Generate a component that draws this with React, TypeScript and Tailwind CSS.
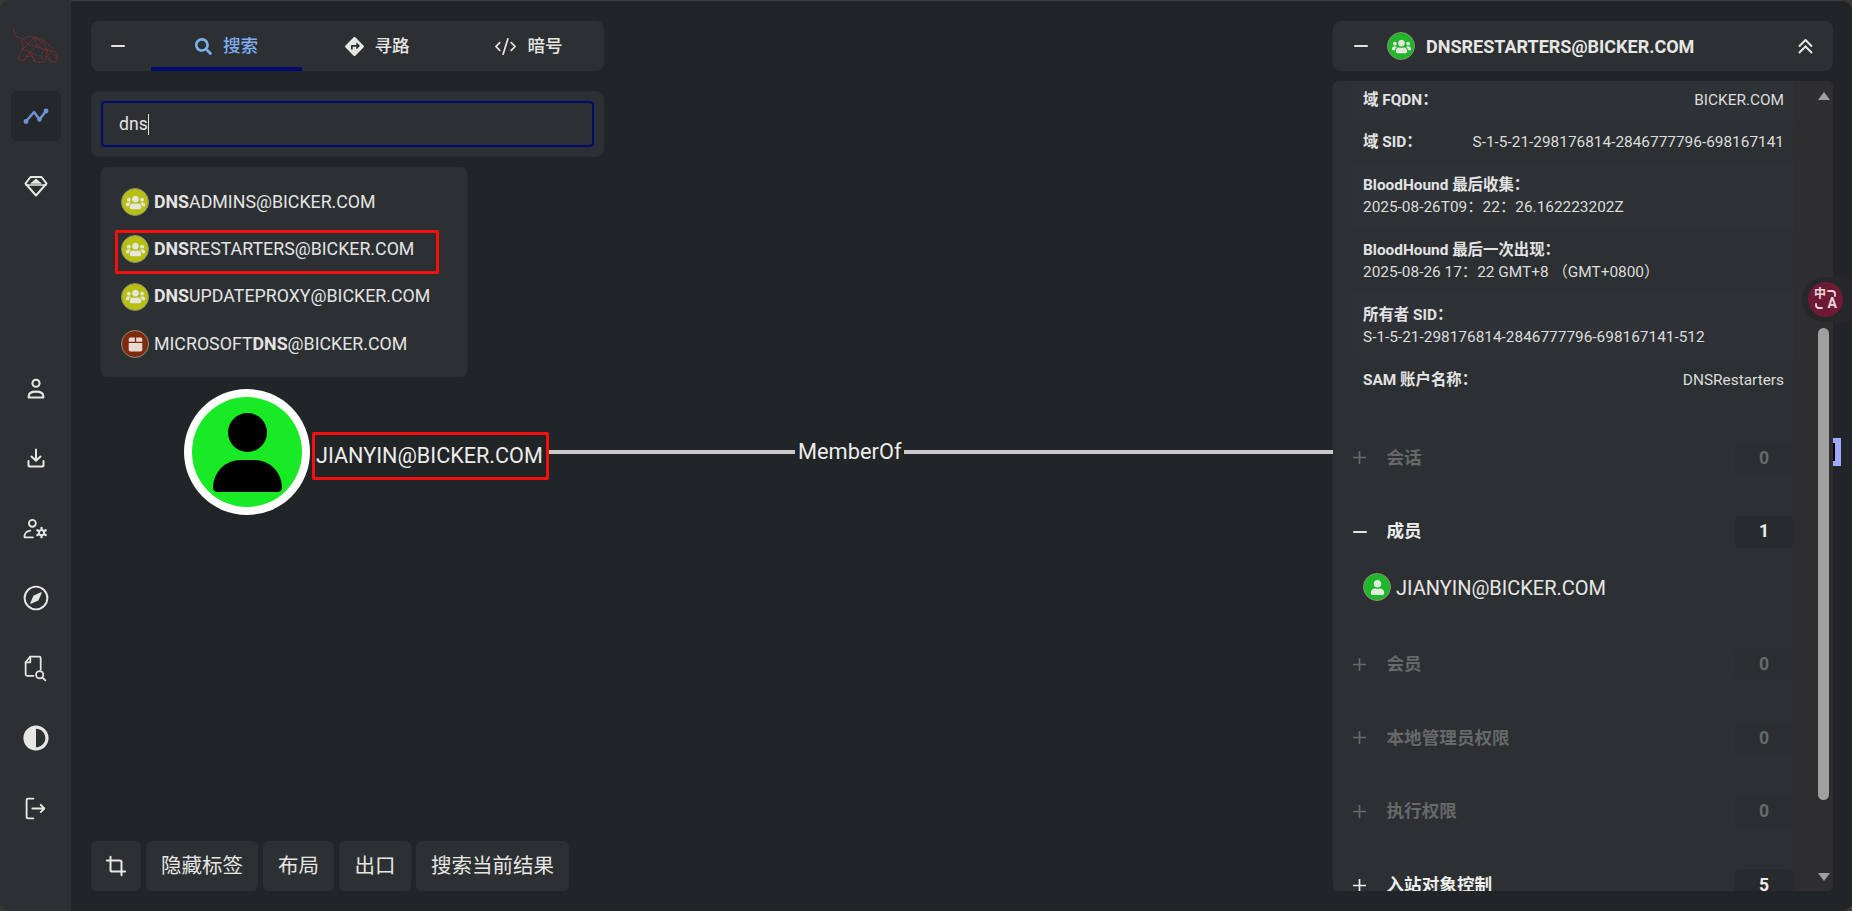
import React from "react";
import { FaSearch, FaDirections, FaUsers, FaUser, FaAdjust } from "react-icons/fa";
import { Crop, CodeXml } from "lucide-react";

const FONT = "font-['Roboto','Noto_Sans_CJK_SC',sans-serif]";

function Minus() {
  return <div className="h-[2px] w-[14px] rounded-sm bg-[#e3e3e3]" />;
}

function NodeIcon({ color, kind }: { color: string; kind: "users" | "user" | "box" }) {
  return (
    <span
      className="flex h-[28px] w-[28px] shrink-0 items-center justify-center rounded-full border border-[#8d8d7a]"
      style={{ backgroundColor: color }}
    >
      {kind === "users" && <FaUsers className="h-[19px] w-[19px] text-[#e6e6e0]" />}
      {kind === "user" && <FaUser className="h-[15px] w-[15px] text-[#dff0df]" />}
      {kind === "box" && (
        <svg viewBox="0 0 16 16" className="h-[17px] w-[17px]">
          <path d="M3 1.500h4.400v4H1.600V3a1.500 1.500 0 0 1 1.400-1.500zM8.600 1.500H13A1.500 1.500 0 0 1 14.400 3v2.500H8.600zM1.600 6.700h12.800V13a1.600 1.600 0 0 1-1.600 1.600H3.200A1.600 1.600 0 0 1 1.600 13z" fill="#e6d9d4" />
        </svg>
      )}
    </span>
  );
}

function Logo() {
  return (
    <svg viewBox="0 0 225 180" className="mt-[15px] h-[60px] w-[75px] shrink-0" fill="none" stroke="#a02a38" strokeWidth="2.200" strokeDasharray="4 1.500">
      <path d="M42 42c0 12 2 20 10 24 8 4 14 7 20 5 7-3 14-7 20-6 12 1 24 3 34 9 12 7 24 17 32 28 7 9 12 17 14 25 1 6 0 11-2 13-5 1-13 1-16-1-4-6-8-13-12-16-3 4-3 12-8 17-8 2-22 2-30 0-3-5-4-12-6-16-6-1-14 0-20 1-1 4-3 9-6 11-6 1-12 0-15-2-1-5 0-10 3-15 4-7 9-16 9-24 0-6-3-12-4-18" />
      <path d="M70 72l14 16-16 14 22 8-12 16M84 88l18-20 10 26-22 16 16 30M102 68l26 12-16 14 22 10-14 18 14 18M128 80l14 26-8-2 20 2 16 22M142 106l-4 22 16 12M84 88l28 6M112 94l22 10M90 110l22 12M154 108l-16 20" />
    </svg>
  );
}

function SideIcon({ children }: { children: React.ReactNode }) {
  return <div className="flex h-[70px] w-full items-center justify-center text-[#e6e6e3]">{children}</div>;
}

function Sidebar() {
  const sw = { fill: "none", stroke: "currentColor", strokeWidth: 2, strokeLinecap: "round" as const, strokeLinejoin: "round" as const };
  return (
    <aside className="z-10 flex h-full w-[71px] shrink-0 flex-col bg-[#2c3033]">
      <Logo />
      <div className="ml-[11px] mt-[16px] flex h-[50px] w-[50px] items-center justify-center rounded-md bg-[#24282a]">
        <svg viewBox="0 0 26 16" className="h-[16px] w-[28px]" fill="none">
          <path d="M3 13.500L11 4l5.500 7.500L23 3" stroke="#6f93d8" strokeWidth="2.400" strokeLinecap="round" strokeLinejoin="round" />
          <circle cx="3" cy="13.500" r="2.400" fill="#6f93d8" />
          <circle cx="16.500" cy="11.500" r="2.200" fill="#6f93d8" />
          <circle cx="23" cy="3" r="2.400" fill="#6f93d8" />
        </svg>
      </div>
      <div className="mt-[23px] flex h-[44px] items-center justify-center text-[#e6e6e3]">
        <svg viewBox="0 0 24 22" className="h-[22px] w-[26px]" {...sw}>
          <path d="M6.500 2h11L22.500 8.500 12 20.500 1.500 8.500z" />
          <path d="M6 8.700h12L12 3.500z" fill="currentColor" stroke="none" />
          <path d="M2 10h20" strokeWidth="1.600" />
        </svg>
      </div>
      <div className="mt-[145px] flex flex-col">
        <SideIcon>
          <svg viewBox="0 0 18 20" className="h-[21px] w-[20px]" {...sw}>
            <circle cx="9" cy="5" r="3.400" />
            <path d="M2 18.500v-1c0-3 3-4.500 7-4.500s7 1.500 7 4.500v1z" />
          </svg>
        </SideIcon>
        <SideIcon>
          <svg viewBox="0 0 18 20" className="h-[20px] w-[20px]" {...sw}>
            <path d="M9 1.500v11M4.500 8.500L9 12.800l4.500-4.300M1.500 13v4.500a1 1 0 0 0 1 1h13a1 1 0 0 0 1-1V13" />
          </svg>
        </SideIcon>
        <SideIcon>
          <svg viewBox="0 0 24 20" className="h-[21px] w-[25px]" {...sw} strokeWidth={1.800}>
            <circle cx="9" cy="5" r="3.300" />
            <path d="M1.500 18.500h8M1.500 18.500c-.500-3.500 2-6 5.500-6.500" />
            <circle cx="17.800" cy="14" r="2.400" />
            <path d="M17.800 9.500v1.500M17.800 17v1.500M13.800 11.700l1.400.8M20.400 15.500l1.400.8M13.800 16.300l1.400-.8M20.400 12.500l1.400-.8" strokeWidth="2.200" />
          </svg>
        </SideIcon>
        <SideIcon>
          <svg viewBox="0 0 24 24" className="h-[26px] w-[26px]" {...sw} strokeWidth={1.800}>
            <circle cx="12" cy="12" r="10.500" />
            <path d="M16.800 7.200l-2.900 6.700-6.700 2.900 2.900-6.700z" fill="currentColor" strokeWidth="1" />
          </svg>
        </SideIcon>
        <SideIcon>
          <svg viewBox="0 0 22 26" className="h-[27px] w-[23px]" {...sw} strokeWidth={1.700}>
            <path d="M9 20H3a1.500 1.500 0 0 1-1.500-1.500V7L6 1.500h8.500A1.500 1.500 0 0 1 16 3v11" />
            <path d="M6 1.500V7H1.500" />
            <circle cx="15" cy="19" r="3.500" />
            <path d="M18 22l2.500 2.500" />
          </svg>
        </SideIcon>
        <SideIcon>
          <FaAdjust className="h-[26px] w-[26px]" />
        </SideIcon>
        <SideIcon>
          <svg viewBox="0 0 20 22" className="h-[23px] w-[23px]" {...sw} strokeWidth={1.800}>
            <path d="M8 1.500H3A1.500 1.500 0 0 0 1.500 3v16A1.500 1.500 0 0 0 3 20.500h5" />
            <path d="M7 11h11.500M15 7.500l3.500 3.500-3.500 3.500" />
          </svg>
        </SideIcon>
      </div>
    </aside>
  );
}

function TabsBar() {
  return (
    <div className="flex h-[50px] items-stretch rounded-lg bg-[#2c3033] text-[17.6px] font-medium text-[#e6e6e3]">
      <div className="flex w-[60px] items-center pl-[20px]">
        <Minus />
      </div>
      <div className="flex w-[151px] items-center justify-center gap-[11px] border-b-[4px] border-[#000a6e] pt-[4px] text-[#7eaef0]">
        <FaSearch className="h-[17px] w-[17px]" />
        <span>搜索</span>
      </div>
      <div className="flex w-[151px] items-center justify-center gap-[10px]">
        <FaDirections className="h-[19px] w-[19px]" />
        <span>寻路</span>
      </div>
      <div className="flex w-[151px] items-center justify-center gap-[10px]">
        <CodeXml className="h-[23px] w-[23px]" strokeWidth={1.800} />
        <span>暗号</span>
      </div>
    </div>
  );
}

function SearchBox() {
  return (
    <div className="mt-[20px] h-[66px] rounded-lg bg-[#2c3033] px-[10px] pt-[10px]">
      <div className="flex h-[46px] items-center rounded border-2 border-[#000a6e] pl-[16px] text-[17.6px] text-[#e3e3e3]">
        dns<span className="ml-[0.5px] h-[21px] w-px bg-[#e3e3e3]" />
      </div>
    </div>
  );
}

const results: { pre: string; bold: string; post: string; color: string; kind: "users" | "box"; marked?: boolean }[] = [
  { pre: "", bold: "DNS", post: "ADMINS@BICKER.COM", color: "#b6bf12", kind: "users" },
  { pre: "", bold: "DNS", post: "RESTARTERS@BICKER.COM", color: "#b6bf12", kind: "users", marked: true },
  { pre: "", bold: "DNS", post: "UPDATEPROXY@BICKER.COM", color: "#b6bf12", kind: "users" },
  { pre: "MICROSOFT", bold: "DNS", post: "@BICKER.COM", color: "#7e2a0c", kind: "box" },
];

function Results() {
  return (
    <div className="ml-[10px] mt-[10px] flex h-[210px] w-[366px] flex-col rounded-md bg-[#2c3033] pl-[20px] pt-[11.500px] text-[17.800px] text-[#e3e3e3]">
      {results.map((r) => (
        <div key={r.post} className="relative flex h-[47.300px] shrink-0 items-center gap-[5px]">
          {r.marked && <div className="absolute -left-[6px] top-[4px] h-[44px] w-[324px] rounded-[2px] border-[3px] border-[#f5110b]" />}
          <NodeIcon color={r.color} kind={r.kind} />
          <span>
            {r.pre}
            <b className="font-bold">{r.bold}</b>
            {r.post}
          </span>
        </div>
      ))}
    </div>
  );
}

function BottomButtons() {
  const btn = "flex h-[50px] items-center justify-center rounded-md bg-[#2c3033] text-[20.500px] text-[#e6e6e3]";
  return (
    <div className="mb-[20px] mt-auto flex gap-[5px]">
      <div className={`${btn} w-[50px]`}>
        <Crop className="h-[22px] w-[22px]" strokeWidth={2.200} />
      </div>
      <div className={`${btn} w-[112px]`}>隐藏标签</div>
      <div className={`${btn} w-[71px]`}>布局</div>
      <div className={`${btn} w-[72px]`}>出口</div>
      <div className={`${btn} w-[153px]`}>搜索当前结果</div>
    </div>
  );
}

function GraphCanvas() {
  return (
    <div className="absolute inset-0">
      <div className="absolute left-[113px] top-[389px] flex h-[126px] w-[126px] items-center justify-center rounded-full bg-white">
        <div className="flex h-[110px] w-[110px] flex-col items-center justify-center overflow-hidden rounded-full bg-[#19ea26]">
          <div className="h-[39px] w-[39px] rounded-full bg-black" />
          <div className="mt-[8px] h-[32px] w-[69px] rounded-b-[5px] rounded-t-[32px] bg-black" />
        </div>
      </div>
      <div className="absolute left-[241px] top-[432px] flex h-[48px] w-[237px] items-center rounded-[2px] border-[3px] border-[#f5110b] pl-[1px] text-[21.600px] text-[#ececea]">
        <span className="whitespace-nowrap">JIANYIN@BICKER.COM</span>
      </div>
      <div className="absolute left-[478px] top-[450px] h-[4px] w-[784px] bg-[#c9c9c9]" />
      <div className="absolute left-[724px] top-[439px] bg-[#212527] px-[3px] text-[21.800px] leading-[26px] text-[#ececea]">MemberOf</div>
    </div>
  );
}

function InfoRow({ label, value, stacked, shade, h }: { label: string; value: string; stacked?: boolean; shade?: boolean; h: number }) {
  return (
    <div
      className={`px-[10px] text-[15.400px] ${shade ? "bg-[#2e3236]" : ""} ${stacked ? "flex flex-col justify-center leading-[22px]" : "flex items-center justify-between"}`}
      style={{ height: h }}
    >
      <span className="font-bold text-[#e3e3e3]">{label}</span>
      <span className="text-[#dcdcda]">{value}</span>
    </div>
  );
}

function Section({ label, count, active, open }: { label: string; count: number; active?: boolean; open?: boolean }) {
  const color = active ? "text-[#eeeeec]" : "text-[#666869]";
  return (
    <div className={`flex h-[73.700px] items-center text-[17.6px] font-bold ${color}`}>
      <div className="flex w-[33.500px] items-center">
        {open ? (
          <Minus />
        ) : (
          <svg viewBox="0 0 13 13" className="h-[13px] w-[13px]">
            <path d="M6.500 0v13M0 6.500h13" stroke="currentColor" strokeWidth="1.700" />
          </svg>
        )}
      </div>
      <span>{label}</span>
      <span className={`ml-auto flex h-[32px] w-[60px] items-center justify-center rounded-md ${active ? "bg-[#282b2e]" : "bg-[#2a2e31]"}`}>{count}</span>
    </div>
  );
}

function Details() {
  return (
    <div className="w-[500px] shrink-0">
      <div className="flex h-[50px] items-center rounded-lg bg-[#2c3033] pl-[21px] pr-[20px] text-[#e6e6e3]">
        <Minus />
        <div className="ml-[19px]">
          <NodeIcon color="#1fb82a" kind="users" />
        </div>
        <span className="ml-[11px] text-[18px] font-bold">DNSRESTARTERS@BICKER.COM</span>
        <svg viewBox="0 0 15 15" className="ml-auto h-[15px] w-[15px]" fill="none" stroke="currentColor" strokeWidth="2">
          <path d="M1 7.500l6.500-6.500L14 7.500M1 14l6.500-6.500L14 14" />
        </svg>
      </div>
      <div className="mt-[10px] flex h-[810px] overflow-hidden rounded-md bg-[#2c3033]">
        <div className="ml-[20px] w-[441px] shrink-0">
          <InfoRow label="域 FQDN：" value="BICKER.COM" h={40} shade />
          <InfoRow label="域 SID：" value="S-1-5-21-298176814-2846777796-698167141" h={43} />
          <InfoRow label="BloodHound 最后收集：" value="2025-08-26T09：22：26.162223202Z" stacked shade h={64} />
          <InfoRow label="BloodHound 最后一次出现：" value="2025-08-26 17：22 GMT+8 （GMT+0800）" stacked h={65} />
          <InfoRow label="所有者 SID：" value="S-1-5-21-298176814-2846777796-698167141-512" stacked shade h={66} />
          <InfoRow label="SAM 账户名称：" value="DNSRestarters" h={43} />
          <div className="h-[19px]" />
          <Section label="会话" count={0} />
          <Section label="成员" count={1} active open />
          <div className="flex h-[59px] items-start gap-[5px] pl-[10px] pt-[5px] text-[20px] leading-[28px] text-[#e6e6e3]">
            <NodeIcon color="#1fb82a" kind="user" />
            <span className="relative top-[1px]">JIANYIN@BICKER.COM</span>
          </div>
          <Section label="会员" count={0} />
          <Section label="本地管理员权限" count={0} />
          <Section label="执行权限" count={0} />
          <Section label="入站对象控制" count={5} active />
        </div>
        <div className="relative w-[39px] shrink-0 bg-[#2e2e31]">
          <div className="absolute left-[24px] top-[11px] h-0 w-0 border-x-[6px] border-b-[8px] border-x-transparent border-b-[#a0a0a0]" />
          <div className="absolute left-[24px] top-[247px] h-[472px] w-[11px] rounded-full bg-[#a0a0a0]" />
          <div className="absolute left-[24px] top-[792px] h-0 w-0 border-x-[6px] border-t-[8px] border-x-transparent border-t-[#a0a0a0]" />
        </div>
      </div>
    </div>
  );
}

function TranslateBadge() {
  return (
    <div className="absolute right-0 top-[277px] flex h-[45px] w-[50px] items-center rounded-l-full bg-[#25272b] pl-[6px]">
      <div className="relative h-[35px] w-[35px] rounded-full bg-[#6f1a35] font-bold leading-none text-[#e6d6da]">
        <span className="absolute left-[6px] top-[6px] text-[12px]">中</span>
        <span className="absolute bottom-[7px] right-[6px] text-[14px]">A</span>
        <svg viewBox="0 0 35 35" className="absolute inset-0 h-[35px] w-[35px]" fill="none" stroke="#e6d6da" strokeWidth="1.800" strokeLinecap="round">
          <path d="M20 9h4a3 3 0 0 1 3 3v2M8 22v1a3 3 0 0 0 3 3h3" />
        </svg>
      </div>
    </div>
  );
}

export default function App() {
  return (
    <div className="h-[911px] w-[1852px] bg-[#3a3938]">
      <div className={`relative flex h-[911px] w-[1852px] overflow-hidden rounded-[10px] bg-[#212527] ${FONT}`}>
        <Sidebar />
        <main className="relative flex flex-1 justify-between pl-[20px] pr-[19px] pt-[21px]">
          <GraphCanvas />
          <div className="relative flex w-[513px] flex-col">
            <TabsBar />
            <SearchBox />
            <Results />
            <BottomButtons />
          </div>
          <div className="relative">
            <Details />
          </div>
        </main>
        <TranslateBadge />
        <div className="absolute right-[11px] top-[438px] flex h-[28px] w-[8px] items-center justify-start bg-[#a0a8ff]">
          <div className="h-[18px] w-[2px] bg-black" />
        </div>
        <div className="pointer-events-none absolute inset-0 rounded-[10px] border-t border-[#3a3c3e]" />
      </div>
    </div>
  );
}
